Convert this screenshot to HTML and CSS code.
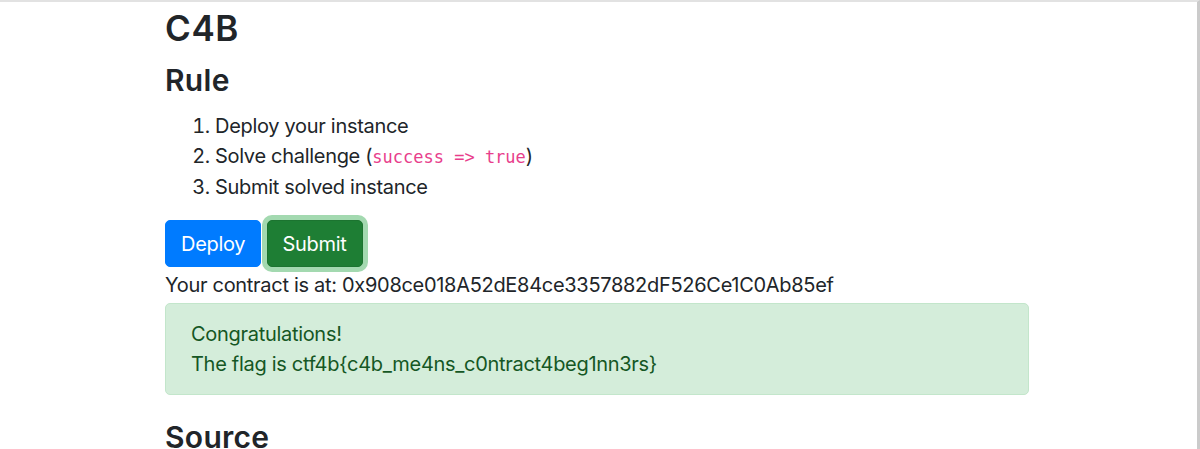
FILE: index.html
```html
<!DOCTYPE html>
<html lang="en">
<head>
<meta charset="utf-8">
<title>C4B</title>
<link rel="stylesheet" href="styles.css">
</head>
<body>
<div class="frame">
  <main class="container">
    <h1 class="title">C4B</h1>
    <h2 class="section section-rule">Rule</h2>
    <ol class="rules">
      <li>Deploy your instance</li>
      <li>Solve challenge (<code>success =&gt; true</code>)</li>
      <li>Submit solved instance</li>
    </ol>
    <div class="actions">
      <button class="btn btn-primary">Deploy</button>
      <button class="btn btn-success active">Submit</button>
    </div>
    <p class="contract">Your contract is at: 0x908ce018A52dE84ce3357882dF526Ce1C0Ab85ef</p>
    <div class="alert">
      <div>Congratulations!</div>
      <div>The flag is ctf4b{c4b_me4ns_c0ntract4beg1nn3rs}</div>
    </div>
    <h2 class="section">Source</h2>
  </main>
</div>
</body>
</html>
```

FILE: styles.css
```css
* { box-sizing: border-box; }
html, body { margin: 0; padding: 0; height: 100%; overflow: hidden; }
body {
  background: #fff;
  color: #212529;
  font-family: Inter, "Liberation Sans", sans-serif;
  font-size: 20px;
  line-height: 30px;
  letter-spacing: -0.3px;
}
.frame {
  height: 449px;
  border-top: 2px solid #e2e2e2;
  border-right: 3px solid #cbcbcb;
  overflow: hidden;
}
.container {
  width: 864px;
  margin-left: 165px;
  padding-top: 5px;
}
.title {
  font-size: 35px;
  font-weight: 600;
  line-height: 42px;
  letter-spacing: 0.6px;
  margin: 0 0 13px;
}
.section {
  font-size: 30px;
  font-weight: 600;
  line-height: 36px;
  letter-spacing: 0.3px;
  margin: 0;
}
.section-rule { margin-bottom: 13px; }
.rules {
  margin: 0 0 18px;
  padding-left: 50px;
}
code {
  font-family: "DejaVu Sans Mono", "Liberation Mono", monospace;
  font-size: 17px;
  letter-spacing: 0;
  color: #e83e8c;
}
.actions { line-height: 30px; padding-bottom: 3px; }
.btn {
  display: inline-block;
  font-family: inherit;
  font-size: 20px;
  line-height: 30px;
  letter-spacing: -0.3px;
  padding: 7.5px 15px;
  border: 1.25px solid transparent;
  border-radius: 5px;
  color: #fff;
  vertical-align: middle;
  cursor: pointer;
}
.btn-primary { background: #007bff; border-color: #007bff; }
.btn-success { background: #28a745; border-color: #28a745; }
.btn-success.active {
  background: #1e7e34;
  border-color: #1c7430;
  box-shadow: 0 0 0 5px rgba(72, 180, 97, 0.5);
}
.contract { margin: 0 0 3px; }
.alert {
  padding: 15px 25px;
  border: 1.25px solid #c3e6cb;
  border-radius: 5px;
  background: #d4edda;
  color: #155724;
  margin-bottom: 24px;
}
```
